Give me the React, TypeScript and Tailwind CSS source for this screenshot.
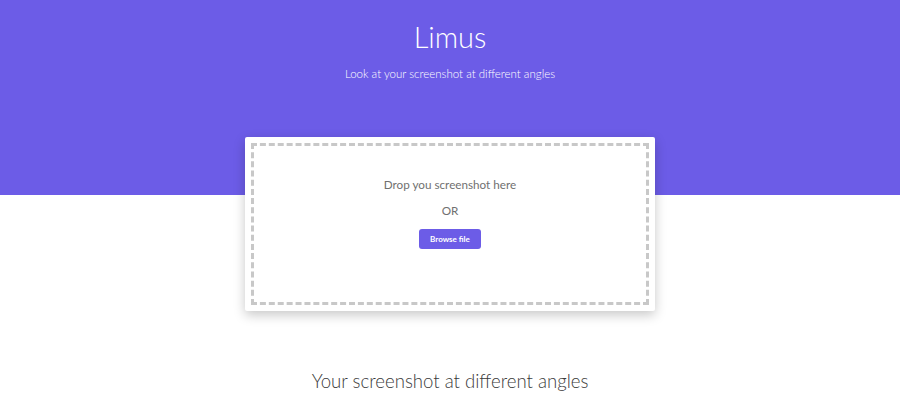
export default function App() {
  return (
    <div className="min-h-[420px] w-full bg-white font-['Lato',sans-serif]">
      <div className="h-[195px] bg-[#6c5ce7] flex flex-col items-center text-white">
        <h1 className="mt-[19px] text-[29px] font-light leading-[36px]">Limus</h1>
        <p className="mt-[11px] text-[11.5px] leading-[15px] font-light text-white">
          Look at your screenshot at different angles
        </p>
      </div>
      <div className="-mt-[58px] flex justify-center">
        <div className="w-[410px] h-[174px] bg-white rounded-[2px] shadow-[0_4px_12px_rgba(0,0,0,0.22)] p-[6px]">
          <div className="h-full border-[3px] border-dashed border-[#c8c8c8] flex flex-col items-center">
            <p className="mt-[31px] text-[11.7px] leading-[15px] text-[#707070]">Drop you screenshot here</p>
            <p className="mt-[11px] text-[11.7px] leading-[15px] text-[#707070]">OR</p>
            <button className="mt-[11px] w-[62px] h-[20px] rounded-[3px] bg-[#6c5ce7] text-white text-[8px] font-bold">
              Browse file
            </button>
          </div>
        </div>
      </div>
      <h2 className="mt-[58px] text-center text-[18.6px] font-light leading-[24px] text-[#3a3a3a]">
        Your screenshot at different angles
      </h2>
    </div>
  );
}
